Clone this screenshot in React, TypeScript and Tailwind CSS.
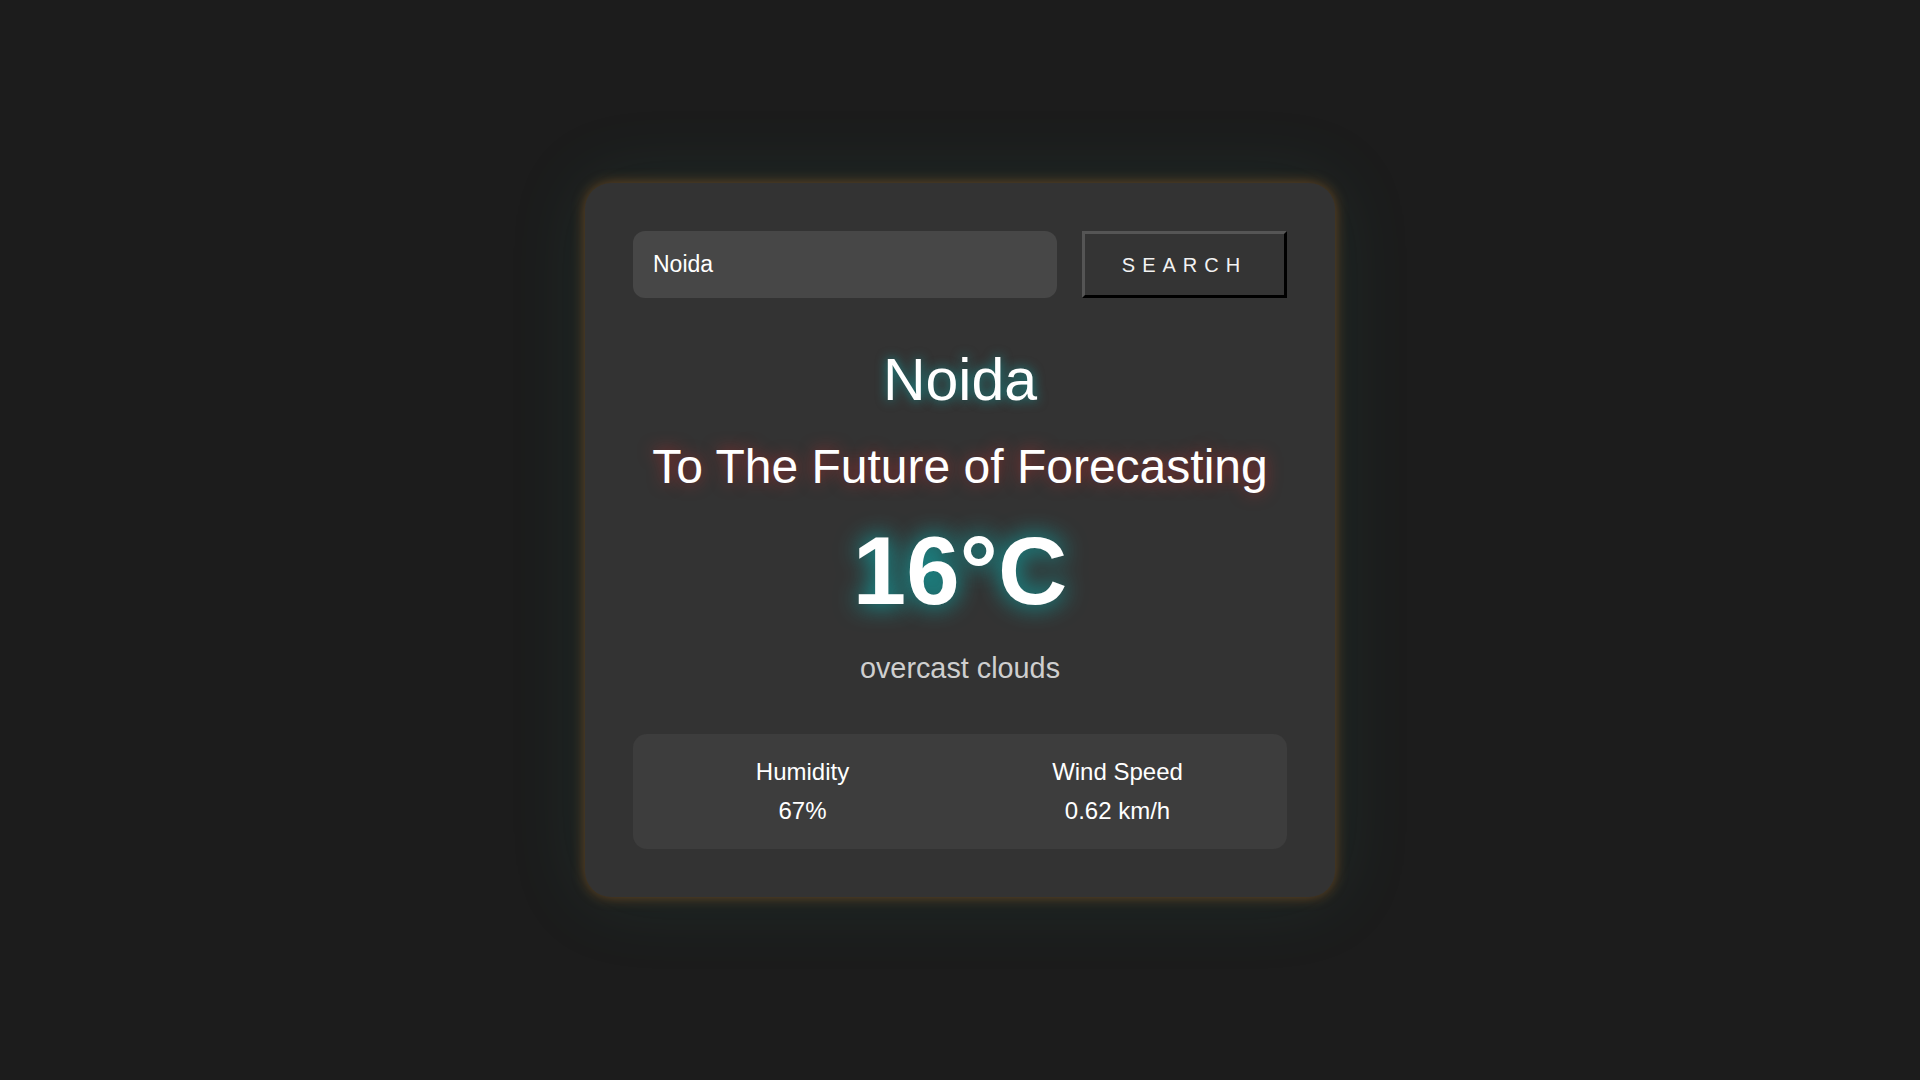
import { useState } from "react";

export default function App() {
  const [city, setCity] = useState("Noida");

  return (
    <div className="min-h-screen bg-[#1c1c1c] flex items-center justify-center font-['Liberation_Sans',Arial,sans-serif]">
      <div className="w-[750px] bg-[#333333] rounded-[26px] p-12 flex flex-col items-center shadow-[0_0_14px_rgba(255,150,40,0.35),0_0_80px_rgba(40,140,120,0.14)]">
        {/* Search row */}
        <div className="w-full flex gap-[25px]">
          <input
            value={city}
            onChange={(e) => setCity(e.target.value)}
            className="flex-1 h-[67px] rounded-xl bg-[#474747] px-5 text-[23px] text-white outline-none"
          />
          <button className="w-[205px] h-[67px] bg-[#343434] border-[3px] border-t-[#555] border-l-[#555] border-r-black border-b-black text-[20px] tracking-[7px] text-[#f2f2f2]">
            SEARCH
          </button>
        </div>

        <h1 className="mt-[49px] text-[59px] leading-[1.15] text-white [text-shadow:0_0_12px_rgba(0,220,220,0.55)]">
          Noida
        </h1>
        <h2 className="mt-[24px] text-[48px] leading-[1.15] text-white [text-shadow:0_0_16px_rgba(255,40,40,0.5)]">
          To The Future of Forecasting
        </h2>
        <div className="mt-[22px] text-[96px] font-bold leading-[1.15] text-white [text-shadow:0_0_24px_rgba(0,210,210,0.8)]">
          16°C
        </div>
        <p className="mt-[25px] text-[28.8px] leading-[1.15] text-[#cfcfcf]">overcast clouds</p>

        {/* Details */}
        <div className="mt-[49px] w-full bg-[#3d3d3d] rounded-[14px] px-3 py-6 grid grid-cols-2 text-white text-[24px] leading-[1.15]">
          <div className="flex flex-col items-center gap-3">
            <span>Humidity</span>
            <span>67%</span>
          </div>
          <div className="flex flex-col items-center gap-3">
            <span>Wind Speed</span>
            <span>0.62 km/h</span>
          </div>
        </div>
      </div>
    </div>
  );
}
